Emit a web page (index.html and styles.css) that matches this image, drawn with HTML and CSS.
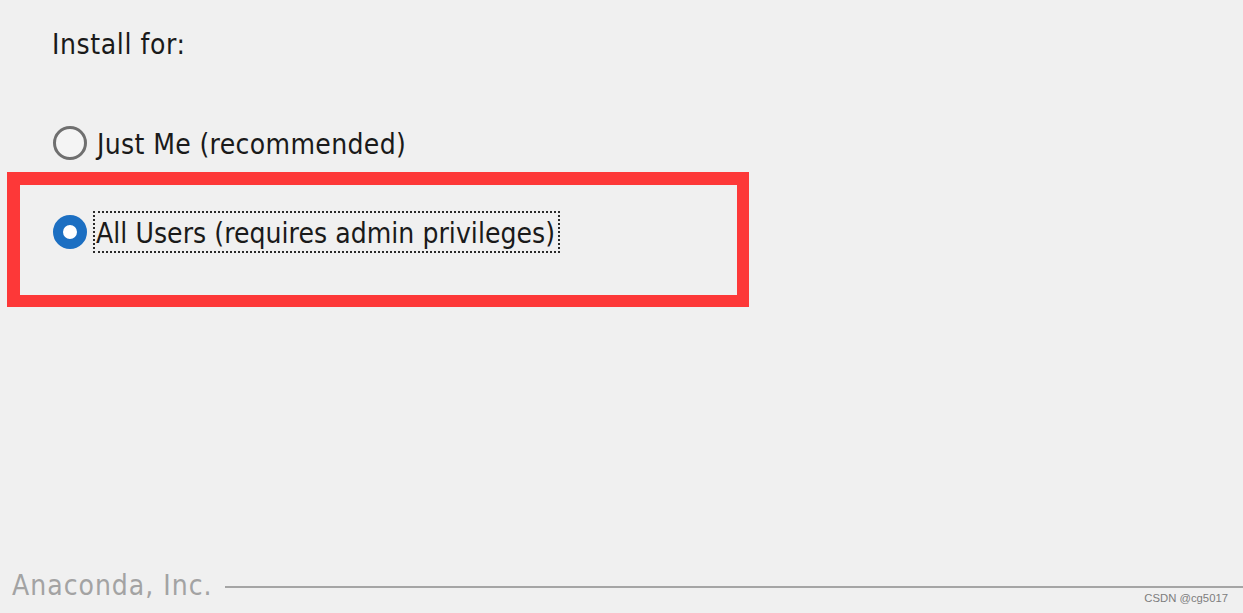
FILE: index.html
```html
<!DOCTYPE html>
<html>
<head>
<meta charset="utf-8">
<link rel="stylesheet" href="styles.css">
</head>
<body>
<div class="page">
  <div class="content">
    <div class="title">Install for:</div>
    <div class="option option-first">
      <span class="radio"></span>
      <span class="label label-plain">Just Me (recommended)</span>
    </div>
    <div class="highlight">
      <div class="option">
        <span class="radio radio-on"></span>
        <span class="label label-focus">All Users (requires admin privileges)</span>
      </div>
    </div>
  </div>
  <div class="footer">
    <span class="brand">Anaconda, Inc.</span>
    <span class="rule"></span>
  </div>
  <div class="watermark">CSDN @cg5017</div>
</div>
</body>
</html>
```

FILE: styles.css
```css
html, body {
  margin: 0;
  padding: 0;
  background: #f0f0f0;
}
.page {
  position: relative;
  width: 1243px;
  height: 613px;
  overflow: hidden;
  display: flex;
  flex-direction: column;
  font-family: "DejaVu Sans Condensed", "DejaVu Sans", sans-serif;
  color: #1a1a1a;
}
.content {
  flex: 1;
  padding-top: 28px;
}
.title {
  margin-left: 52px;
  font-size: 28px;
  letter-spacing: 0.6px;
  line-height: 34px;
}
.option {
  display: flex;
  align-items: center;
  gap: 9px;
}
.option-first {
  margin-left: 53px;
  margin-top: 64px;
}
.radio {
  box-sizing: border-box;
  width: 34px;
  height: 34px;
  border-radius: 50%;
  border: 3px solid #6f6f6f;
  background: #f4f4f4;
  flex: none;
}
.radio-on {
  border: 10px solid #1c6fc2;
  background: #ffffff;
}
.label {
  font-size: 28px;
  line-height: 34px;
}
.label-plain {
  margin-left: 1px;
  padding-top: 4px;
  line-height: 30px;
  letter-spacing: 0.35px;
}
.label-focus {
  border: 2px dotted #2a2a2a;
  padding: 4px 3px 0 1px;
  margin-left: -3px;
  letter-spacing: 0.05px;
}
.highlight {
  box-sizing: border-box;
  margin-left: 7px;
  margin-top: 12px;
  width: 742px;
  height: 135px;
  border: 12px solid #fd3838;
  border-left-width: 13px;
  border-top-width: 13px;
  padding: 26px 0 0 33px;
}
.footer {
  display: flex;
  align-items: center;
  gap: 12px;
  padding-left: 12px;
  height: 34px;
  margin-bottom: 10px;
}
.brand {
  font-size: 28px;
  letter-spacing: 1px;
  color: #a3a3a3;
  line-height: 30px;
}
.rule {
  flex: 1;
  height: 2px;
  background: #a5a5a5;
  margin-top: 2px;
}
.watermark {
  position: absolute;
  right: 15px;
  bottom: 9px;
  font-family: "Liberation Sans", Arial, sans-serif;
  font-size: 11.3px;
  color: #7d7d7d;
}
```
